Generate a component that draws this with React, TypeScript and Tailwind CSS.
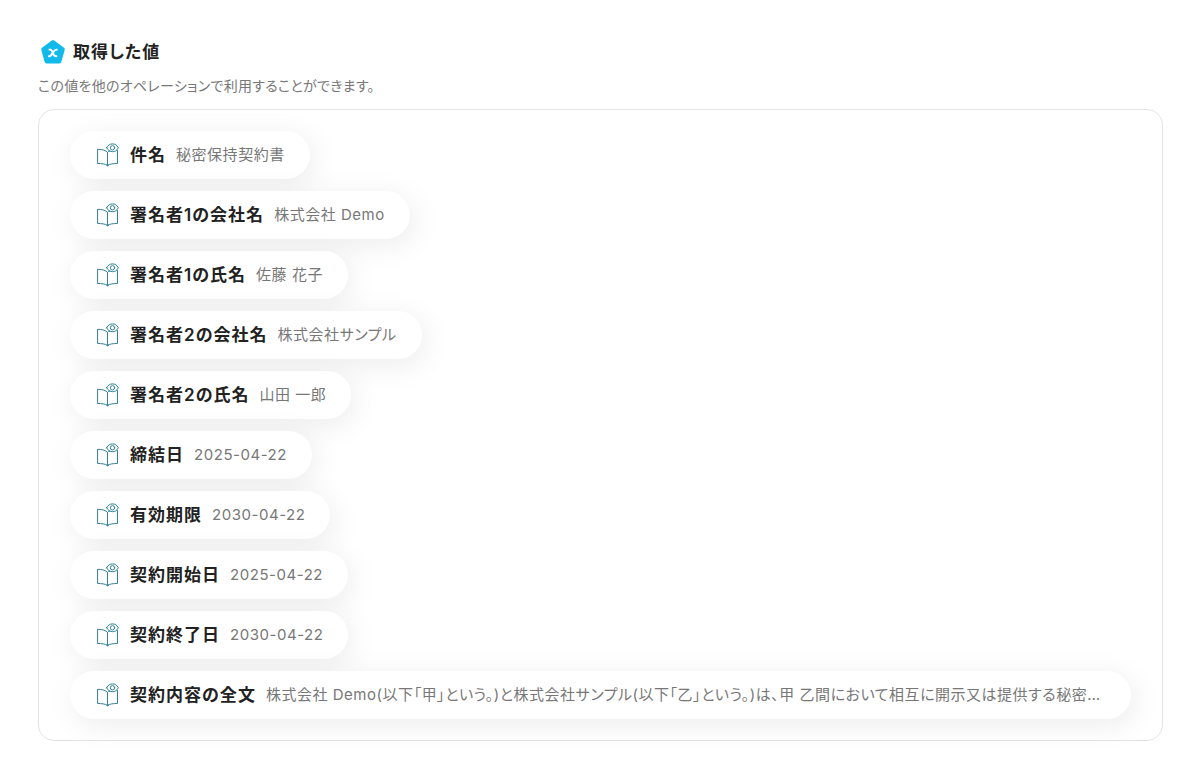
import clsx from 'clsx'

type RetrievedValue = {
  label: string
  value: string
  wide?: boolean
}

const values: RetrievedValue[] = [
  { label: '件名', value: '秘密保持契約書' },
  { label: '署名者1の会社名', value: '株式会社 Demo' },
  { label: '署名者1の氏名', value: '佐藤 花子' },
  { label: '署名者2の会社名', value: '株式会社サンプル' },
  { label: '署名者2の氏名', value: '山田 一郎' },
  { label: '締結日', value: '2025-04-22' },
  { label: '有効期限', value: '2030-04-22' },
  { label: '契約開始日', value: '2025-04-22' },
  { label: '契約終了日', value: '2030-04-22' },
  {
    label: '契約内容の全文',
    value: '株式会社 Demo(以下「甲」という。)と株式会社サンプル(以下「乙」という。)は、甲 乙間において相互に開示又は提供する秘密…',
    wide: true
  }
]

function VariableIcon() {
  return (
    <svg viewBox="0 0 26 26" className="w-[26px] h-[26px] shrink-0" aria-hidden="true">
      <path
        d="M13 3 22.8 10.3 19.4 22.5H6.600L3.2 10.3Z"
        fill="#12b9eb"
        stroke="#12b9eb"
        strokeWidth="4"
        strokeLinejoin="round"
      />
      <path
        d="M9.400 10.600C10.800 10.400 11.300 10.900 11.800 11.900L13.800 15.800C14.300 16.800 14.900 17.400 16.500 17.200M16.800 10.700C15.600 10.500 14.900 11 14.200 11.900L11.400 15.900C10.700 16.900 10.100 17.400 8.900 17.200"
        fill="none"
        stroke="#fff"
        strokeWidth="1.900"
        strokeLinejoin="round"
        strokeLinecap="round"
      />
    </svg>
  )
}

function BookIcon() {
  return (
    <svg
      viewBox="0 0 24 24"
      className="w-6 h-6 shrink-0"
      fill="none"
      stroke="#2f8296"
      strokeWidth="1"
      strokeLinejoin="round"
      strokeLinecap="round"
      aria-hidden="true"
    >
      {/* Open book */}
      <path d="M11.500 9.400C10 7.200 6 6.300 1.600 6.300V20.500C5.500 20.500 9.400 20.900 11.500 22.400C13.600 20.900 17.500 20.500 21.500 20.500V7.500" />
      <path d="M11.500 22.400V9.400C12 8.700 12.800 8.200 13.800 7.900" />
      <circle cx="11.500" cy="22.300" r="0.600" fill="#2f8296" />
      {/* Eye */}
      <path d="M10.700 4.800C12 2 14 0.900 16.500 0.900S21 2 22.300 4.800C21 7.600 19 8.700 16.500 8.700S12 7.600 10.700 4.800Z" />
      <circle cx="16.500" cy="4.800" r="2.200" />
    </svg>
  )
}

function ValuePill({ label, value, wide }: RetrievedValue) {
  return (
    <li
      className={clsx(
        'flex h-12 max-w-full items-center rounded-full bg-white pl-[26px] pr-[25px] shadow-[4px_6px_30px_rgba(0,0,0,0.08)]',
        wide && 'w-full'
      )}
    >
      <BookIcon />
      <span className="ml-[10px] shrink-0 whitespace-nowrap text-[17px] leading-6 font-semibold tracking-[0.06em] text-[#222]">
        {label}
      </span>
      <span className="ml-[10px] min-w-0 truncate text-[15px] leading-6 tracking-[0.035em] text-[#777]">
        {value}
      </span>
    </li>
  )
}

export default function App() {
  return (
    <main className="bg-white py-[38px] pl-[38px] pr-[37px] font-['Inter','Noto_Sans_CJK_JP',sans-serif] [font-feature-settings:'palt']">
      <header>
        <div className="flex items-center gap-[7px] pl-[2px]">
          <VariableIcon />
          <h1 className="text-[17px] leading-7 font-semibold tracking-[0.06em] text-[#222]">取得した値</h1>
        </div>
        <p className="mt-2 text-[14px] leading-6 tracking-[0.02em] text-[#777]">
          この値を他のオペレーションで利用することができます。
        </p>
      </header>

      <ul className="mt-[11px] flex flex-col items-start gap-3 rounded-2xl border border-[#e4e4e4] px-[31px] py-[21px]">
        {values.map((item) => (
          <ValuePill key={item.label} {...item} />
        ))}
      </ul>
    </main>
  )
}
